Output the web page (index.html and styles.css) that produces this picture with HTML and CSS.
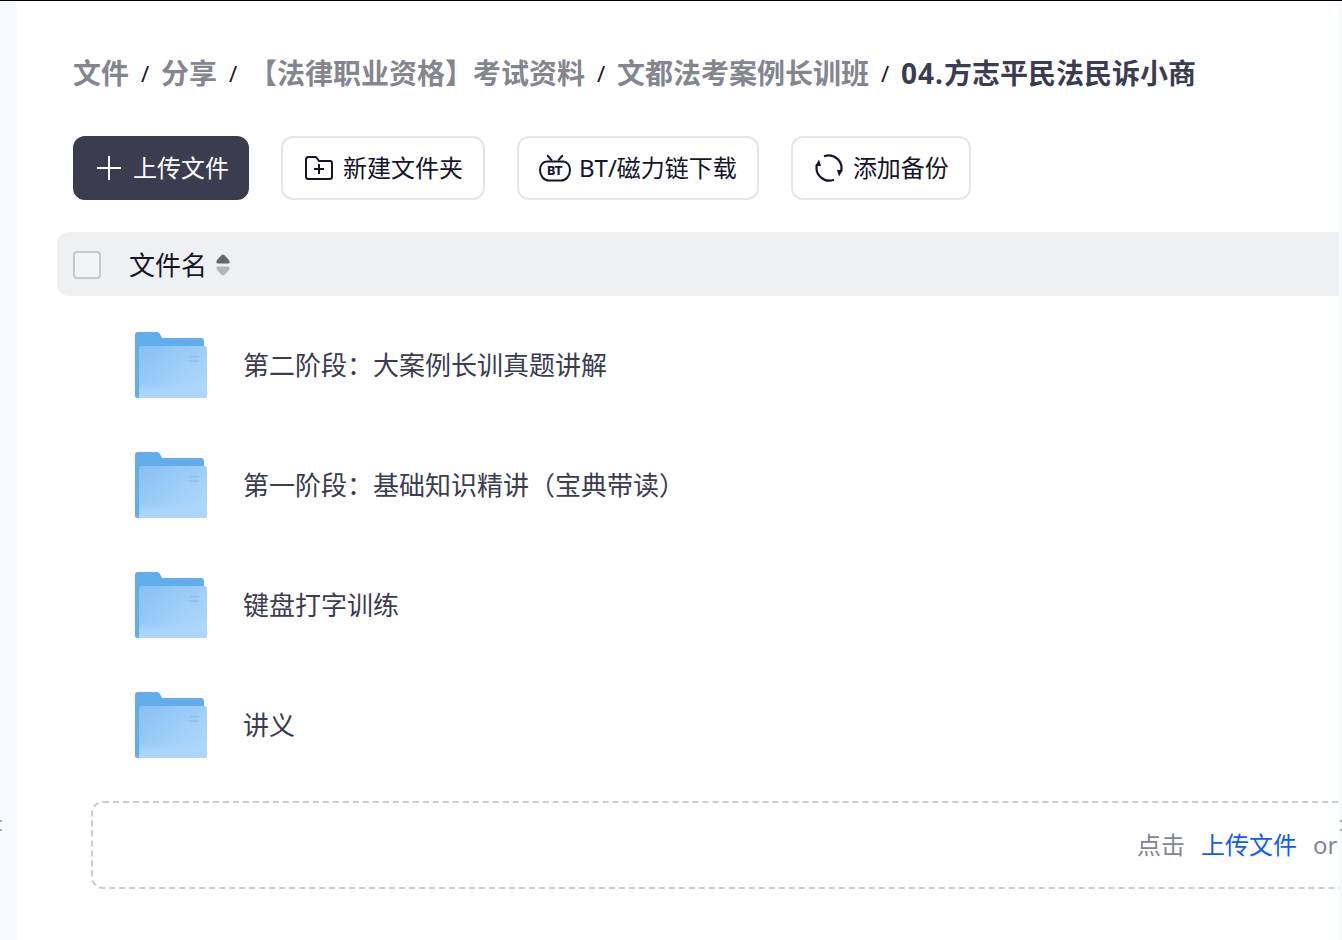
FILE: index.html
```html
<!DOCTYPE html>
<html lang="zh-CN">
<head>
<meta charset="utf-8">
<title>文件</title>
<link rel="stylesheet" href="styles.css">
</head>
<body>
<div class="app">
  <aside class="rail rail-left"><i class="rail-mark"></i><i class="rail-mark"></i></aside>
  <main class="panel">
    <nav class="crumbs">
      <span class="crumb">文件</span><span class="sep">/</span>
      <span class="crumb">分享</span><span class="sep">/</span>
      <span class="crumb">【法律职业资格】考试资料</span><span class="sep">/</span>
      <span class="crumb">文都法考案例长训班</span><span class="sep">/</span>
      <span class="crumb crumb-current"><span class="num">04.</span>方志平民法民诉小商</span>
    </nav>
    <div class="toolbar">
      <button class="btn btn-primary">
        <svg class="icon-plus" width="24" height="24" viewBox="0 0 24 24"><path d="M12 0v24M0 12h24" stroke="#fff" stroke-width="2" fill="none"/></svg>
        <span>上传文件</span>
      </button>
      <button class="btn">
        <svg width="28" height="24" viewBox="0 0 28 24"><path d="M1 3.500Q1 1 3.500 1H11L14 5H25Q27 5 27 7V20.500Q27 23 24.500 23H3.500Q1 23 1 20.500Z" stroke="#14142b" stroke-width="2" fill="none" stroke-linejoin="round"/><path d="M14 8v10M9 13h10" stroke="#14142b" stroke-width="2" fill="none"/></svg>
        <span>新建文件夹</span>
      </button>
      <button class="btn btn-bt">
        <svg width="32" height="28" viewBox="0 0 32 28"><path d="M8 1.500C10 2 11 5 13 6.500M24 1.500C22 2 21 5 19 6.500" stroke="#14142b" stroke-width="2" fill="none"/><path d="M8 7.500H24C28 7.500 31 11 31 16C31 22 27 26.500 22 26.500H10C5 26.500 1 22 1 16C1 11 4 7.500 8 7.500Z" stroke="#14142b" stroke-width="2" fill="none"/><text x="16" y="21" text-anchor="middle" class="bt-text">BT</text></svg>
        <span>BT/磁力链下载</span>
      </button>
      <button class="btn">
        <svg width="28" height="28" viewBox="0 0 28 28"><path d="M9 2.300A12.800 12.800 0 0 1 26 17.500M19 25.700A12.800 12.800 0 0 1 2 10.500" stroke="#14142b" stroke-width="2.200" fill="none"/><path d="M22 16L27.800 16L24 22.500Z M6 12L0.200 12L4 5.500Z" fill="#14142b"/></svg>
        <span>添加备份</span>
      </button>
    </div>
    <div class="table-head">
      <span class="check"></span>
      <span class="head-title">文件名</span>
      <svg class="sort" width="14" height="22" viewBox="0 0 14 22"><path d="M5.500 1.200Q7 0 8.500 1.200L13 6Q14.500 9.500 12 9.500H2Q-0.500 9.500 1 6Z" fill="#66666b"/><path d="M5.500 20.800Q7 22 8.500 20.800L13 16Q14.500 12.500 12 12.500H2Q-0.500 12.500 1 16Z" fill="#b4b4b8"/></svg>
    </div>
    <ul class="rows">
      <li class="row">
        <svg class="folder" width="72" height="66" viewBox="0 0 72 66"><use href="#folder-art"/></svg>
        <span class="name">第二阶段：大案例长训真题讲解</span>
      </li>
      <li class="row">
        <svg class="folder" width="72" height="66" viewBox="0 0 72 66"><use href="#folder-art"/></svg>
        <span class="name">第一阶段：基础知识精讲（宝典带读）</span>
      </li>
      <li class="row">
        <svg class="folder" width="72" height="66" viewBox="0 0 72 66"><use href="#folder-art"/></svg>
        <span class="name">键盘打字训练</span>
      </li>
      <li class="row">
        <svg class="folder" width="72" height="66" viewBox="0 0 72 66"><use href="#folder-art"/></svg>
        <span class="name">讲义</span>
      </li>
    </ul>
    <div class="dropzone">
      <span class="hint">点击</span>
      <span class="link">上传文件</span>
      <span class="hint">or</span>
    </div>
  </main>
  <aside class="rail rail-right"><i class="rail-mark"></i><i class="rail-mark"></i></aside>
</div>
<svg class="defs" width="0" height="0">
  <defs>
    <linearGradient id="front" x1="0" y1="0" x2="1" y2="0.800">
      <stop offset="0" stop-color="#86c0f3"/>
      <stop offset="1" stop-color="#b0d8fb"/>
    </linearGradient>
    <linearGradient id="band" x1="0" y1="0" x2="0" y2="1">
      <stop offset="0" stop-color="#aed6fb" stop-opacity="0"/>
      <stop offset="0.600" stop-color="#aed6fb"/>
      <stop offset="1" stop-color="#aed6fb"/>
    </linearGradient>
    <g id="folder-art">
      <path d="M0 3Q0 0 3 0H22Q24 0 25 2L27 6H66Q69 6 69 9V66H2Q0 66 0 64Z" fill="#62aeec"/>
      <path d="M4 16.500Q4 14 6.500 14H69.500Q72 14 72 16.500V63.500Q72 66 69.500 66H4Z" fill="url(#front)"/>
      <path d="M4 52H72V63.500Q72 66 69.500 66H4Z" fill="url(#band)"/>
      <path d="M54 24.500H64M54 29H64" stroke="#8fc3f1" stroke-width="2" fill="none"/>
    </g>
  </defs>
</svg>
</body>
</html>
```
FILE: styles.css
```css
* { box-sizing: border-box; }
html, body { margin: 0; padding: 0; height: 100%; overflow: hidden; }
body {
  font-family: "Noto Sans", "Noto Sans CJK SC", sans-serif;
  color: #14142b;
  background: #f6f9ff;
  border-top: 1px solid #000;
}
.app { display: flex; height: 939px; }
.rail {
  flex: none;
  display: flex;
  flex-direction: column;
  gap: 7px;
  padding-top: 819px;
}
.rail-left { width: 17px; }
.rail-right { width: 3px; padding-left: 1px; }
.rail-mark { display: block; width: 2px; height: 2px; background: #a9abb5; }
.panel {
  width: 1322px;
  flex: none;
  background: #fff;
  overflow: hidden;
  padding: 52px 0 0 56px;
}
.crumbs {
  display: flex;
  align-items: center;
  height: 40px;
  font-size: 28px;
  line-height: 40px;
  font-weight: 700;
  white-space: nowrap;
}
.crumb { color: #84858f; }
.crumb-current { color: #3b3c50; }
.num { letter-spacing: 1px; }
.sep {
  width: 32px;
  text-align: center;
  font-size: 22px;
  font-weight: 400;
  color: #14142b;
}
.toolbar { display: flex; gap: 32px; margin-top: 43px; }
.btn {
  display: flex;
  align-items: center;
  gap: 10px;
  height: 64px;
  padding: 0 20px 0 22px;
  border: 2px solid #e6e6e8;
  border-radius: 12px;
  background: #fff;
  color: #14142b;
  font: inherit;
  font-size: 24px;
  line-height: 32px;
  white-space: nowrap;
}
.btn-primary {
  background: #3b3c50;
  border-color: #3b3c50;
  color: #fff;
  gap: 12px;
  padding-right: 18px;
}
.btn-bt { gap: 8px; padding-left: 20px; }
.bt-text { font-size: 12px; font-weight: 800; fill: #14142b; font-family: "Inter", sans-serif; }
.table-head {
  display: flex;
  align-items: center;
  width: 1400px;
  height: 64px;
  margin: 32px 0 0 -16px;
  padding: 2px 0 0 16px;
  background: #eff0f2;
  border-radius: 12px;
}
.check {
  width: 28px;
  height: 28px;
  border: 2px solid #c6c6cc;
  border-radius: 4px;
  background: #f3f4f6;
}
.head-title { margin-left: 28px; font-size: 26px; line-height: 36px; }
.sort { margin-left: 9px; }
.rows { list-style: none; margin: 9px 0 0; padding: 0; }
.row { display: flex; align-items: center; height: 120px; padding-left: 62px; }
.folder { flex: none; }
.name { margin-left: 36px; font-size: 26px; line-height: 36px; color: #3b3c50; white-space: nowrap; }
.dropzone {
  display: flex;
  align-items: center;
  gap: 16px;
  width: 1400px;
  height: 88px;
  margin: 16px 0 0 18px;
  padding-left: 1044px;
  border: 2px dashed #cbcbd0;
  border-radius: 12px;
  font-size: 24px;
  line-height: 32px;
  white-space: nowrap;
}
.hint { color: #84858f; }
.link { color: #0d5cff; }
.defs { position: absolute; }
```
